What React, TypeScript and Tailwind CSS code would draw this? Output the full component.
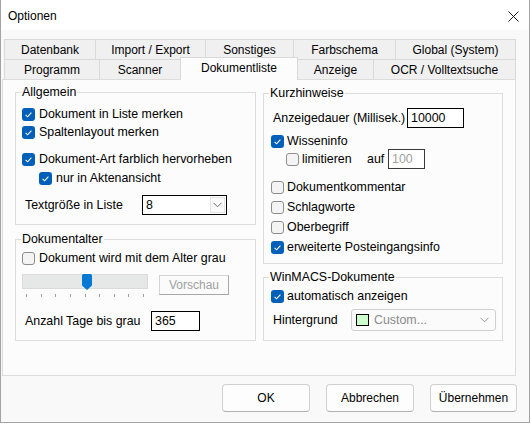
import React from "react";

const FONT = { fontFamily: '"Liberation Sans", Arial, sans-serif' };

function Check({ checked }: { checked: boolean }) {
  if (checked) {
    return (
      <span className="flex h-[13px] w-[13px] shrink-0 items-center justify-center rounded-[3px] bg-[#005fb8]">
        <svg width="13" height="13" viewBox="0 0 13 13">
          <path d="M3.6 6.9 L5.6 8.8 L9.4 4.6" fill="none" stroke="#ffffff" strokeWidth="1.1" />
        </svg>
      </span>
    );
  }
  return <span className="block h-[13px] w-[13px] shrink-0 rounded-[3px] border border-[#8d8d8d] bg-[#f4f4f4]" />;
}

function CB({ checked, label, gap = "gap-[4px]", h = "h-[18px]" }: { checked: boolean; label: string; gap?: string; h?: string }) {
  return (
    <div className={`flex items-center ${gap} ${h}`}>
      <Check checked={checked} />
      <span className="whitespace-nowrap">{label}</span>
    </div>
  );
}

function Chevron({ color = "#6b6b6b" }: { color?: string }) {
  return (
    <svg width="9" height="6" viewBox="0 0 9 6">
      <path d="M0.5 0.8 L4.5 4.8 L8.5 0.8" fill="none" stroke={color} strokeWidth="1" />
    </svg>
  );
}

function Group({ title, className, children }: { title: string; className: string; children: React.ReactNode }) {
  return (
    <div className={`relative border border-[#dcdcdc] ${className}`}>
      <span className="absolute left-[5px] top-[-8px] bg-[#fcfcfc] px-[1px] leading-[14px] whitespace-nowrap">{title}</span>
      {children}
    </div>
  );
}

function Tab({ label, w, extra = "" }: { label: string; w: string; extra?: string }) {
  return (
    <div className={`flex h-[20px] items-center justify-center border-t border-[#d9d9d9] bg-[#f0f0f0] whitespace-nowrap ${w} ${extra}`}>
      {label}
    </div>
  );
}

export default function App() {
  const ticks = [0, 1, 2, 3, 4, 5, 6, 7, 8];
  return (
    <div className="h-[424px] w-[531px] bg-white text-[12px] text-black" style={FONT}>
      <div className="flex h-[423px] w-[530px] flex-col border-x border-b border-[#a3a3a3] bg-[#f9f9f9]">
        {/* title bar */}
        <div className="flex h-[30px] shrink-0 items-center justify-between bg-white pl-[7px] pr-[10px]">
          <span className="pt-[2px]">Optionen</span>
          <svg width="11" height="11" viewBox="0 0 11 11" className="mt-[2px]">
            <path d="M0.5 0.5 L10.5 10.5 M10.5 0.5 L0.5 10.5" stroke="#1a1a1a" strokeWidth="1" />
          </svg>
        </div>

        {/* tabs */}
        <div className="ml-[3px] mt-[9px] flex">
          <Tab label="Datenbank" w="w-[91px]" extra="border-l" />
          <Tab label="Import / Export" w="w-[110px]" extra="border-l" />
          <Tab label="Sonstiges" w="w-[88px]" extra="border-l" />
          <Tab label="Farbschema" w="w-[102px]" extra="border-l" />
          <Tab label="Global (System)" w="w-[121px]" extra="border-x" />
        </div>
        <div className="ml-[3px] flex h-[20px] items-end">
          <Tab label="Programm" w="w-[95px]" extra="border-l" />
          <Tab label="Scanner" w="w-[81px]" extra="border-l" />
          <div className="relative z-10 -mb-px flex h-[23px] w-[118px] items-center justify-center border-x border-t border-[#d9d9d9] bg-[#fcfcfc] pb-[2px] whitespace-nowrap">
            Dokumentliste
          </div>
          <Tab label="Anzeige" w="w-[75px]" />
          <Tab label="OCR / Volltextsuche" w="w-[143px]" extra="border-x" />
        </div>

        {/* panel */}
        <div className="ml-[1px] flex h-[297px] w-[514px] shrink-0 gap-[7px] border border-[#dcdcdc] bg-[#fcfcfc] pl-[12px] text-[12.4px]">
          {/* left column */}
          <div className="flex w-[241px] flex-col">
            <Group title="Allgemein" className="mt-[12px] pb-[9px] pl-[6px] pt-[12px]">
              <CB checked label="Dokument in Liste merken" />
              <CB checked label="Spaltenlayout merken" />
              <div className="mt-[9px]">
                <CB checked label="Dokument-Art farblich hervorheben" />
              </div>
              <div className="ml-[17px] mt-[1px]">
                <CB checked label="nur in Aktenansicht" />
              </div>
              <div className="mt-[8px] flex h-[20px] items-center">
                <span className="ml-[3px] w-[117px] whitespace-nowrap">Textgröße in Liste</span>
                <div className="flex h-[20px] w-[85px] items-center justify-between border border-black bg-white pl-[3px] pr-[1px]">
                  <span>8</span>
                  <span className="flex h-[16px] w-[15px] items-center justify-center border border-[#e3e3e3] bg-[#fafafa]">
                    <Chevron />
                  </span>
                </div>
              </div>
            </Group>

            <Group title="Dokumentalter" className="mt-[14px] pb-[9px] pl-[6px] pt-[9px]">
              <CB checked={false} label="Dokument wird mit dem Alter grau" />
              <div className="mt-[7px] flex h-[24px] items-start gap-[11px]">
                <div className="flex w-[126px] flex-col">
                  <div className="relative h-[15px] w-[126px] border border-[#dadcdc] bg-[#e6e8e8]">
                    <svg width="10" height="16" viewBox="0 0 10 16" className="absolute left-[59px] top-[-1px]">
                      <path d="M1.5 0 H8.5 Q10 0 10 1.5 V11.5 L5 16 L0 11.5 V1.5 Q0 0 1.5 0 Z" fill="#0078d4" />
                    </svg>
                  </div>
                  <div className="mt-[5px] flex justify-between px-[4px]">
                    {ticks.map((t) => (
                      <span key={t} className="block h-[3px] w-px bg-[#a0a0a0]" />
                    ))}
                  </div>
                </div>
                <div className="mt-[1px] flex h-[20px] w-[70px] items-center justify-center border border-[#d4d4d4] border-b-[#a8a8a8] border-r-[#a8a8a8] bg-[#fbfbfb] text-[12px] text-[#a0a0a0]">
                  Vorschau
                </div>
              </div>
              <div className="mt-[13px] flex h-[20px] items-center">
                <span className="ml-[3px] w-[126px] whitespace-nowrap">Anzahl Tage bis grau</span>
                <div className="flex h-[20px] w-[49px] items-center border border-black bg-white pl-[3px]">365</div>
              </div>
            </Group>
          </div>

          {/* right column */}
          <div className="flex w-[240px] flex-col">
            <Group title="Kurzhinweise" className="mt-[13px] pb-[6px] pl-[7px] pt-[14px]">
              <div className="flex h-[20px] items-center">
                <span className="ml-[2px] w-[134px] whitespace-nowrap">Anzeigedauer (Millisek.)</span>
                <div className="flex h-[20px] w-[57px] items-center border border-black bg-white pl-[3px]">10000</div>
              </div>
              <div className="mt-[5px]">
                <CB checked label="Wisseninfo" gap="gap-[3px]" h="h-[16px]" />
              </div>
              <div className="ml-[15px] flex h-[20px] items-center">
                <Check checked={false} />
                <span className="ml-[3px] w-[65px]">limitieren</span>
                <span className="w-[21px]">auf</span>
                <div className="flex h-[20px] w-[37px] items-center border border-[#3a3a3a] bg-white pl-[3px] text-[#a0a0a0]">100</div>
              </div>
              <div className="mt-[8px]">
                <CB checked={false} label="Dokumentkommentar" gap="gap-[3px]" h="h-[20px]" />
                <CB checked={false} label="Schlagworte" gap="gap-[3px]" h="h-[20px]" />
                <CB checked={false} label="Oberbegriff" gap="gap-[3px]" h="h-[20px]" />
                <CB checked label="erweiterte Posteingangsinfo" gap="gap-[3px]" h="h-[20px]" />
              </div>
            </Group>

            <Group title="WinMACS-Dokumente" className="mt-[13px] pb-[9px] pl-[7px] pt-[9px]">
              <CB checked label="automatisch anzeigen" gap="gap-[3px]" />
              <div className="mt-[4px] flex h-[22px] items-center">
                <span className="ml-[2px] w-[78px]">Hintergrund</span>
                <div className="flex h-[22px] w-[145px] items-center rounded-[3px] border border-[#d0d0d0] bg-[#fbfbfb] pl-[4px] pr-[6px]">
                  <span className="block h-[12px] w-[13px] border border-black bg-[#ccffcc]" />
                  <span className="ml-[5px] text-[#8a8a8a]">Custom...</span>
                  <span className="ml-auto flex items-center">
                    <Chevron color="#9a9a9a" />
                  </span>
                </div>
              </div>
            </Group>
          </div>
        </div>

        {/* buttons */}
        <div className="mt-[8px] flex justify-end gap-[16px] pr-[12px]">
          <div className="flex h-[28px] w-[88px] items-center justify-center rounded-[4px] border border-[#d0d0d0] border-b-[#b0b0b0] bg-[#fdfdfd]">OK</div>
          <div className="flex h-[28px] w-[88px] items-center justify-center rounded-[4px] border border-[#d0d0d0] border-b-[#b0b0b0] bg-[#fdfdfd]">Abbrechen</div>
          <div className="flex h-[28px] w-[87px] items-center justify-center rounded-[4px] border border-[#d0d0d0] border-b-[#b0b0b0] bg-[#fdfdfd]">Übernehmen</div>
        </div>
      </div>
    </div>
  );
}
